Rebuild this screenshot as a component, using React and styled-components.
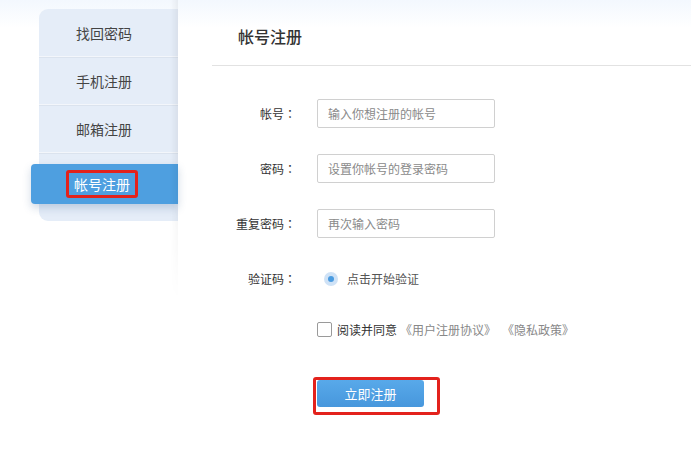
import React from "react";
import styled, { createGlobalStyle } from "styled-components";

const Global = createGlobalStyle`
  html, body { margin: 0; padding: 0; }
  body {
    width: 691px;
    height: 454px;
    overflow: hidden;
    background: linear-gradient(to bottom, #f3f8fe 0px, #ffffff 28px);
    font-family: "Noto Sans CJK SC", "Microsoft YaHei", "Liberation Sans", sans-serif;
    color: #333;
  }
`;

const Page = styled.div`
  display: flex;
  width: 691px;
  height: 454px;
`;

const SideColumn = styled.div`
  width: 178px;
  flex: none;
  padding: 9px 0 0 39px;
  box-sizing: border-box;
`;

const SideCard = styled.div`
  background: #e5edf8;
  border-radius: 9px 0 0 9px;
  padding: 0 0 17px 0;
  display: flex;
  flex-direction: column;
`;

const SideItem = styled.div`
  height: 47px;
  display: flex;
  align-items: center;
  padding-left: 37px;
  font-size: 14px;
  line-height: 20px;
  color: #444;
  border-bottom: 1px solid #f3f6fb;
  box-shadow: 0 1px 0 #dbe3ee;
`;

const SideActive = styled.div`
  height: 40px;
  margin: 11px 0 0 -8px;
  display: flex;
  align-items: center;
  padding-left: 35px;
  background: #4e9fe0;
  border-radius: 4px 0 0 4px;
  box-shadow: 0 4px 8px rgba(40, 80, 130, 0.22);
  color: #fff;
  font-size: 14px;
  line-height: 20px;
`;

const Mark = styled.span`
  display: inline-block;
  border: 3px solid #e3221c;
  border-radius: 3px;
  padding: 1px 5px;
`;

const Panel = styled.div`
  flex: 1;
  position: relative;
  &::before {
    content: "";
    position: absolute;
    left: -8px;
    top: 0;
    width: 8px;
    height: 300px;
    background: linear-gradient(to left, rgba(0, 0, 0, 0.05), rgba(0, 0, 0, 0));
    -webkit-mask-image: linear-gradient(to bottom, #000 60%, transparent);
    mask-image: linear-gradient(to bottom, #000 60%, transparent);
  }
`;

const Header = styled.div`
  height: 66px;
  margin-left: 34px;
  border-bottom: 1px solid #e2e2e2;
  display: flex;
  align-items: center;
  padding: 6px 0 0 26px;
  box-sizing: border-box;
`;

const Title = styled.h1`
  margin: 0;
  font-size: 16px;
  line-height: 24px;
  font-weight: 500;
  color: #333;
`;

const Form = styled.div`
  display: flex;
  flex-direction: column;
  margin: 33px 0 0 34px;
`;

const Row = styled.div`
  display: flex;
  align-items: center;
  height: 29px;
  margin-top: ${(p) => p.$mt || 0}px;
`;

const Label = styled.label`
  width: 84px;
  margin-right: 21px;
  text-align: right;
  font-size: 12px;
  line-height: 16px;
  color: #333;
  flex: none;
`;

const Colon = styled.span`
  font-family: "Noto Sans CJK TC", "Noto Sans CJK SC", sans-serif;
`;

const Input = styled.input`
  width: 178px;
  height: 29px;
  box-sizing: border-box;
  border: 1px solid #d0d0d0;
  border-radius: 2px;
  padding: 0 10px;
  font-size: 12px;
  font-family: inherit;
  color: #333;
  outline: none;
  &::placeholder { color: #8a8a8a; }
`;

const Verify = styled.div`
  display: flex;
  align-items: center;
  gap: 9px;
  padding-left: 7px;
  font-size: 12px;
  color: #555;
`;

const Radio = styled.span`
  width: 14px;
  height: 14px;
  border-radius: 50%;
  background: #cfe2f6;
  display: flex;
  align-items: center;
  justify-content: center;
  &::after {
    content: "";
    width: 6px;
    height: 6px;
    border-radius: 50%;
    background: #4a9be0;
  }
`;

const Agree = styled.div`
  display: flex;
  align-items: center;
  margin-left: 105px;
  font-size: 12px;
  color: #333;
  text-spacing-trim: space-all;
`;

const Check = styled.span`
  width: 13px;
  height: 13px;
  border: 1px solid #9a9a9a;
  border-radius: 2px;
  margin-right: 5px;
  background: #fff;
`;

const Link = styled.span`
  color: #888;
  margin-left: ${(p) => p.$ml || 0}px;
`;

const ButtonMark = styled.div`
  align-self: flex-start;
  margin: 33px 0 0 101px;
  border: 3px solid #e3221c;
  border-radius: 3px;
  padding: 0 13px 5px 1px;
`;

const Button = styled.button`
  width: 107px;
  height: 27px;
  border: none;
  border-radius: 3px;
  background: linear-gradient(to bottom, #58a9ea, #4797dc);
  color: #fff;
  font-family: inherit;
  font-size: 13px;
  display: block;
`;

function FieldLabel({ children }) {
  return (
    <Label>
      {children}
      <Colon>：</Colon>
    </Label>
  );
}

export default function App() {
  return (
    <>
      <Global />
      <Page>
        <SideColumn>
          <SideCard>
            <SideItem>找回密码</SideItem>
            <SideItem>手机注册</SideItem>
            <SideItem>邮箱注册</SideItem>
            <SideActive>
              <Mark>帐号注册</Mark>
            </SideActive>
          </SideCard>
        </SideColumn>
        <Panel>
          <Header>
            <Title>帐号注册</Title>
          </Header>
          <Form>
            <Row>
              <FieldLabel>帐号</FieldLabel>
              <Input placeholder="输入你想注册的帐号" />
            </Row>
            <Row $mt={26}>
              <FieldLabel>密码</FieldLabel>
              <Input placeholder="设置你帐号的登录密码" />
            </Row>
            <Row $mt={26}>
              <FieldLabel>重复密码</FieldLabel>
              <Input placeholder="再次输入密码" />
            </Row>
            <Row $mt={26}>
              <FieldLabel>验证码</FieldLabel>
              <Verify>
                <Radio />
                点击开始验证
              </Verify>
            </Row>
            <Row $mt={22}>
              <Agree>
                <Check />
                阅读并同意
                <Link $ml={3}>《用户注册协议》</Link>
                <Link $ml={6}>《隐私政策》</Link>
              </Agree>
            </Row>
            <ButtonMark>
              <Button>立即注册</Button>
            </ButtonMark>
          </Form>
        </Panel>
      </Page>
    </>
  );
}
